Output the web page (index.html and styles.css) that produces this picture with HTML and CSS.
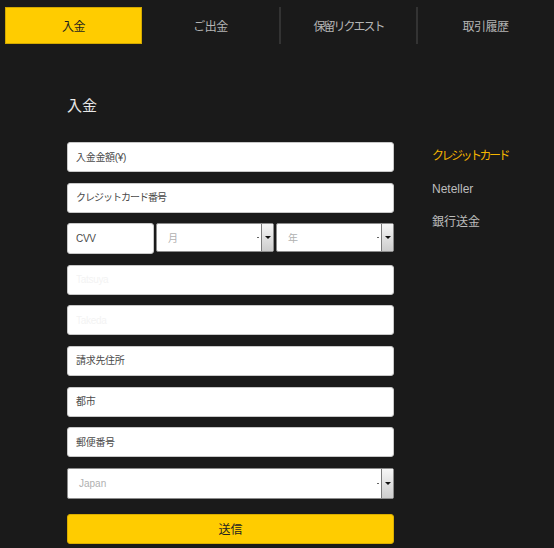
FILE: index.html
```html
<!DOCTYPE html>
<html lang="ja">
<head>
<meta charset="utf-8">
<title>入金</title>
<link rel="stylesheet" href="styles.css">
</head>
<body>
<nav class="tabs">
  <div class="tab active">入金</div>
  <div class="tab">ご出金</div>
  <div class="tab sep kana">保留リクエスト</div>
  <div class="tab sep">取引履歴</div>
</nav>
<main class="content">
  <h1 class="title">入金</h1>
  <div class="layout">
    <form class="form">
      <input class="input" type="text" placeholder="入金金額(¥)">
      <input class="input kana" type="text" placeholder="クレジットカード番号">
      <div class="row3">
        <input class="input cvv" type="text" placeholder="CVV">
        <div class="select"><span class="sel-text">月</span><span class="dash"></span><span class="arrow"></span></div>
        <div class="select"><span class="sel-text">年</span><span class="dash"></span><span class="arrow"></span></div>
      </div>
      <input class="input faint" type="text" placeholder="Tatsuya">
      <input class="input faint" type="text" placeholder="Takeda">
      <input class="input" type="text" placeholder="請求先住所">
      <input class="input" type="text" placeholder="都市">
      <input class="input" type="text" placeholder="郵便番号">
      <div class="select country"><span class="sel-text">Japan</span><span class="dash"></span><span class="arrow"></span></div>
      <button class="submit" type="button">送信</button>
    </form>
    <ul class="side">
      <li class="side-item current kana">クレジットカード</li>
      <li class="side-item">Neteller</li>
      <li class="side-item">銀行送金</li>
    </ul>
  </div>
</main>
</body>
</html>
```
FILE: styles.css
```css
* { box-sizing: border-box; }

body {
  margin: 0;
  width: 554px;
  height: 548px;
  overflow: hidden;
  background: #1a1a1a;
  font-family: "Liberation Sans", "Noto Sans CJK JP", sans-serif;
}

.tabs {
  display: grid;
  grid-template-columns: repeat(4, 137px);
  padding: 7px 0 0 5px;
}

.tab {
  height: 37px;
  display: flex;
  align-items: center;
  justify-content: center;
  color: #b4b4b4;
  font-size: 12px;
  letter-spacing: -0.5px;
}

.tab.kana {
  letter-spacing: -2px;
}

.tab.active {
  background: #ffcc00;
  color: #1e1e1e;
  box-shadow: inset 0 0 0 1px #d3a800;
}

.tab.sep {
  border-left: 2px solid #333333;
}

.content {
  padding-left: 67px;
}

.title {
  margin: 0;
  padding-top: 52px;
  font-size: 15px;
  line-height: 20px;
  font-weight: normal;
  color: #e8e8e8;
}

.layout {
  display: flex;
  gap: 38px;
  margin-top: 26px;
}

.form {
  width: 327px;
  display: flex;
  flex-direction: column;
  gap: 10.6px;
  margin: 0;
}

.input {
  width: 100%;
  height: 30px;
  margin: 0;
  border: 1px solid #c8c8c8;
  border-radius: 3px;
  background: #ffffff;
  padding: 0 8px;
  font-family: inherit;
  font-size: 10px;
  letter-spacing: -0.3px;
  color: #444444;
  outline: none;
}

.input.kana {
  letter-spacing: -1px;
}

.input::placeholder {
  color: #4a4a4a;
}

.input.faint::placeholder {
  color: #f3f3f3;
}

.row3 {
  display: grid;
  grid-template-columns: 87px 1fr 1fr;
  gap: 2px;
}

.input.cvv {
  height: 31px;
}

.select {
  height: 29px;
  display: flex;
  align-items: center;
  background: #ffffff;
  border: 1px solid #8c8c8c;
  border-radius: 2px;
  padding-left: 11px;
  font-size: 10px;
  color: #b0b0b0;
}

.select.country {
  height: 31px;
}

.sel-text {
  flex: 1;
}

.dash {
  width: 2px;
  height: 1px;
  background: #666666;
  margin-right: 2px;
}

.arrow {
  width: 12px;
  align-self: stretch;
  border-left: 1px solid #7a7a7a;
  background: linear-gradient(#f6f6f6, #cdcdcd);
  display: flex;
  align-items: center;
  justify-content: center;
}

.arrow::after {
  content: "";
  border-left: 3px solid transparent;
  border-right: 3px solid transparent;
  border-top: 3px solid #111111;
}

.submit {
  margin-top: 4.4px;
  height: 30px;
  width: 100%;
  background: #ffcc00;
  border: 1px solid #d9ad00;
  border-radius: 3px;
  font-family: inherit;
  font-size: 12px;
  color: #222222;
  padding: 0;
}

.side {
  list-style: none;
  margin: 0;
  padding: 6px 0 0 0;
  display: flex;
  flex-direction: column;
  gap: 17px;
}

.side-item {
  font-size: 12px;
  line-height: 16px;
  color: #bdbdbd;
}

.side-item.kana {
  letter-spacing: -2.5px;
}

.side-item.current {
  color: #f5b500;
}
```
